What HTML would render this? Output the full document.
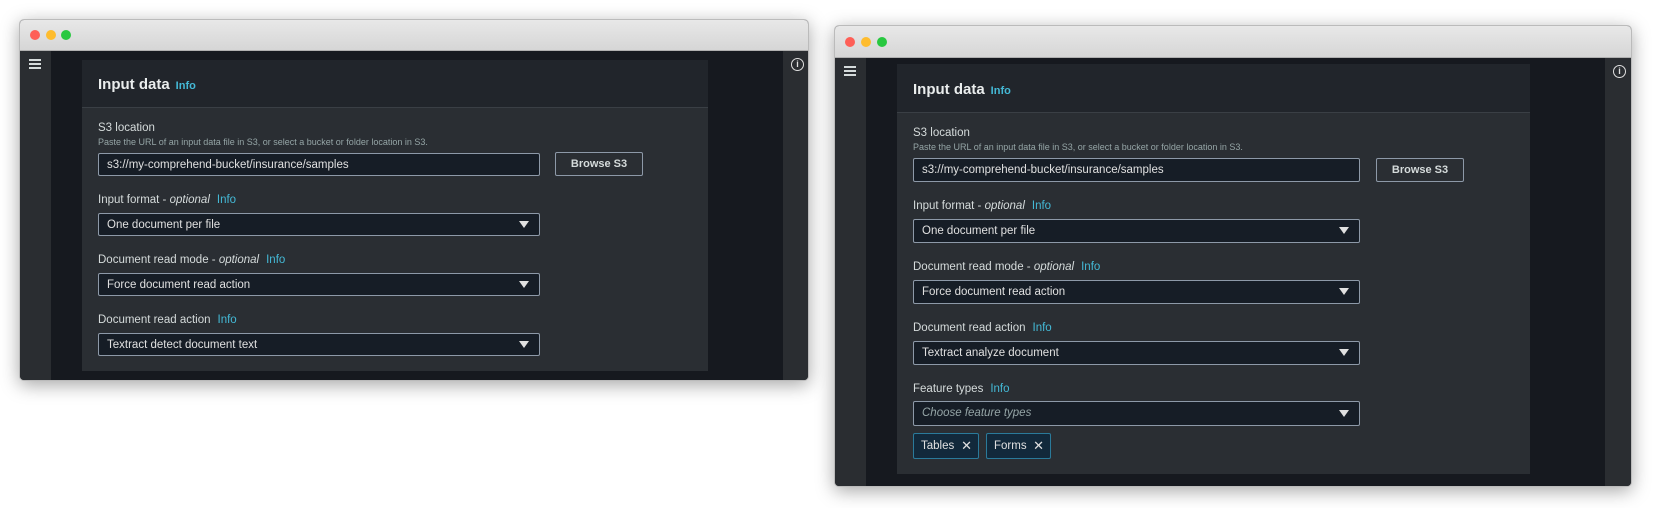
<!DOCTYPE html>
<html><head><meta charset="utf-8"><style>
*{box-sizing:border-box;margin:0;padding:0}
body{width:1654px;height:508px;background:#fff;position:relative;overflow:hidden;font-family:"Liberation Sans",sans-serif;color:#d5dbdb}
.win{position:absolute;background:#16191f;border-radius:5px;overflow:hidden;box-shadow:0 4px 18px rgba(0,0,0,.35);border:1px solid #bbb}
.tb{position:absolute;left:0;right:0;top:0;background:linear-gradient(#e8e8e8,#d6d6d6);border-bottom:1px solid #b0b0b0}
.dot{position:absolute;width:10px;height:10px;border-radius:50%;top:50%;margin-top:-5px}
.ls,.rs{position:absolute;bottom:0;background:#2a2d31}
.ham{position:absolute;width:12px;height:10px;border-top:2px solid #d5dbdb;border-bottom:2px solid #d5dbdb}
.ham:after{content:"";position:absolute;left:0;right:0;top:2px;border-top:2px solid #d5dbdb}
.ic{position:absolute;width:13px;height:13px;border:1.5px solid #e0e0e0;border-radius:50%;font-size:9px;font-weight:bold;text-align:center;line-height:10px;color:#e0e0e0}
.panel{position:absolute;background:#2a2e33}
.ph{position:absolute;left:0;right:0;top:0;background:#21252b;border-bottom:1px solid #3a3f45}
.t{position:absolute;white-space:nowrap}
.h{font-size:15px;font-weight:bold;color:#eaeded}
.info{color:#44b9d6;font-size:11px;font-weight:bold;font-style:normal;margin-left:6px}
.lbl{font-size:11.5px;color:#d5dbdb}
.lbl .info{font-weight:normal;font-size:11.5px;margin-left:7px}
.desc{font-size:9px;color:#95a5a6}
.box{position:absolute;background:#161d26;border:1px solid #8d99a8;border-radius:2px;font-size:11.5px;color:#e0e0e0;padding-left:8px;padding-top:2px;line-height:19px}
.box .ar{position:absolute;right:10px;top:50%;margin-top:-4px;width:0;height:0;border-left:5px solid transparent;border-right:5px solid transparent;border-top:7px solid #e0e0e0}
.btn{position:absolute;border:1px solid #8d99a8;border-radius:2px;font-size:11px;font-weight:bold;color:#d5dbdb;display:flex;align-items:center;justify-content:center}
.tok{position:absolute;background:#12293b;border:1px solid #2a7a9a;border-radius:2px;font-size:11.5px;color:#e0e0e0;padding-left:7px;line-height:24px}
.tok span{position:absolute;right:6px;top:0;font-size:13px}
</style></head><body>

<div class="win" style="left:19px;top:19px;width:790px;height:362px">
 <div class="tb" style="height:31px"><div class="dot" style="left:10px;background:#fe5f57"></div><div class="dot" style="left:26px;background:#febc2e"></div><div class="dot" style="left:41px;background:#28c840"></div></div>
 <div class="ls" style="left:0;top:31px;width:31px"><div class="ham" style="left:9px;top:8px"></div></div>
 <div class="rs" style="left:763px;top:31px;width:27px"><div class="ic" style="left:8px;top:7px">i</div></div>
 <div class="panel" style="left:62px;top:40px;width:626px;height:311px">
  <div class="ph" style="height:48px"></div>
  <div class="t h" style="left:16px;top:16px">Input data<span class="info">Info</span></div>
  <div class="t lbl" style="left:16px;top:62px">S3 location</div>
  <div class="t desc" style="left:16px;top:77px">Paste the URL of an input data file in S3, or select a bucket or folder location in S3.</div>
  <div class="box" style="left:16px;top:93px;width:442px;height:23px">s3://my-comprehend-bucket/insurance/samples</div>
  <div class="btn" style="left:473px;top:92px;width:88px;height:24px">Browse S3</div>
  <div class="t lbl" style="left:16px;top:134px">Input format - <i>optional</i><span class="info">Info</span></div>
  <div class="box" style="left:16px;top:153px;width:442px;height:23px">One document per file<div class="ar"></div></div>
  <div class="t lbl" style="left:16px;top:194px">Document read mode - <i>optional</i><span class="info">Info</span></div>
  <div class="box" style="left:16px;top:213px;width:442px;height:23px">Force document read action<div class="ar"></div></div>
  <div class="t lbl" style="left:16px;top:254px">Document read action<span class="info">Info</span></div>
  <div class="box" style="left:16px;top:273px;width:442px;height:23px">Textract detect document text<div class="ar"></div></div>
 </div>
</div>

<div class="win" style="left:834px;top:25px;width:798px;height:462px">
 <div class="tb" style="height:32px"><div class="dot" style="left:10px;background:#fe5f57"></div><div class="dot" style="left:26px;background:#febc2e"></div><div class="dot" style="left:42px;background:#28c840"></div></div>
 <div class="ls" style="left:0;top:32px;width:31px"><div class="ham" style="left:9px;top:8px"></div></div>
 <div class="rs" style="left:770px;top:32px;width:28px"><div class="ic" style="left:8px;top:7px">i</div></div>
 <div class="panel" style="left:62px;top:38px;width:633px;height:410px">
  <div class="ph" style="height:49px"></div>
  <div class="t h" style="left:16px;top:17px">Input data<span class="info">Info</span></div>
  <div class="t lbl" style="left:16px;top:63px">S3 location</div>
  <div class="t desc" style="left:16px;top:78px">Paste the URL of an input data file in S3, or select a bucket or folder location in S3.</div>
  <div class="box" style="left:16px;top:94px;width:447px;height:24px">s3://my-comprehend-bucket/insurance/samples</div>
  <div class="btn" style="left:479px;top:94px;width:88px;height:24px">Browse S3</div>
  <div class="t lbl" style="left:16px;top:136px">Input format - <i>optional</i><span class="info">Info</span></div>
  <div class="box" style="left:16px;top:155px;width:447px;height:24px">One document per file<div class="ar"></div></div>
  <div class="t lbl" style="left:16px;top:197px">Document read mode - <i>optional</i><span class="info">Info</span></div>
  <div class="box" style="left:16px;top:216px;width:447px;height:24px">Force document read action<div class="ar"></div></div>
  <div class="t lbl" style="left:16px;top:258px">Document read action<span class="info">Info</span></div>
  <div class="box" style="left:16px;top:277px;width:447px;height:24px">Textract analyze document<div class="ar"></div></div>
  <div class="t lbl" style="left:16px;top:319px">Feature types<span class="info">Info</span></div>
  <div class="box" style="left:16px;top:337px;width:447px;height:25px;color:#95a5a6;font-style:italic">Choose feature types<div class="ar"></div></div>
  <div class="tok" style="left:16px;top:369px;width:66px;height:26px">Tables<span>✕</span></div>
  <div class="tok" style="left:89px;top:369px;width:65px;height:26px">Forms<span>✕</span></div>
 </div>
</div>
</body></html>
